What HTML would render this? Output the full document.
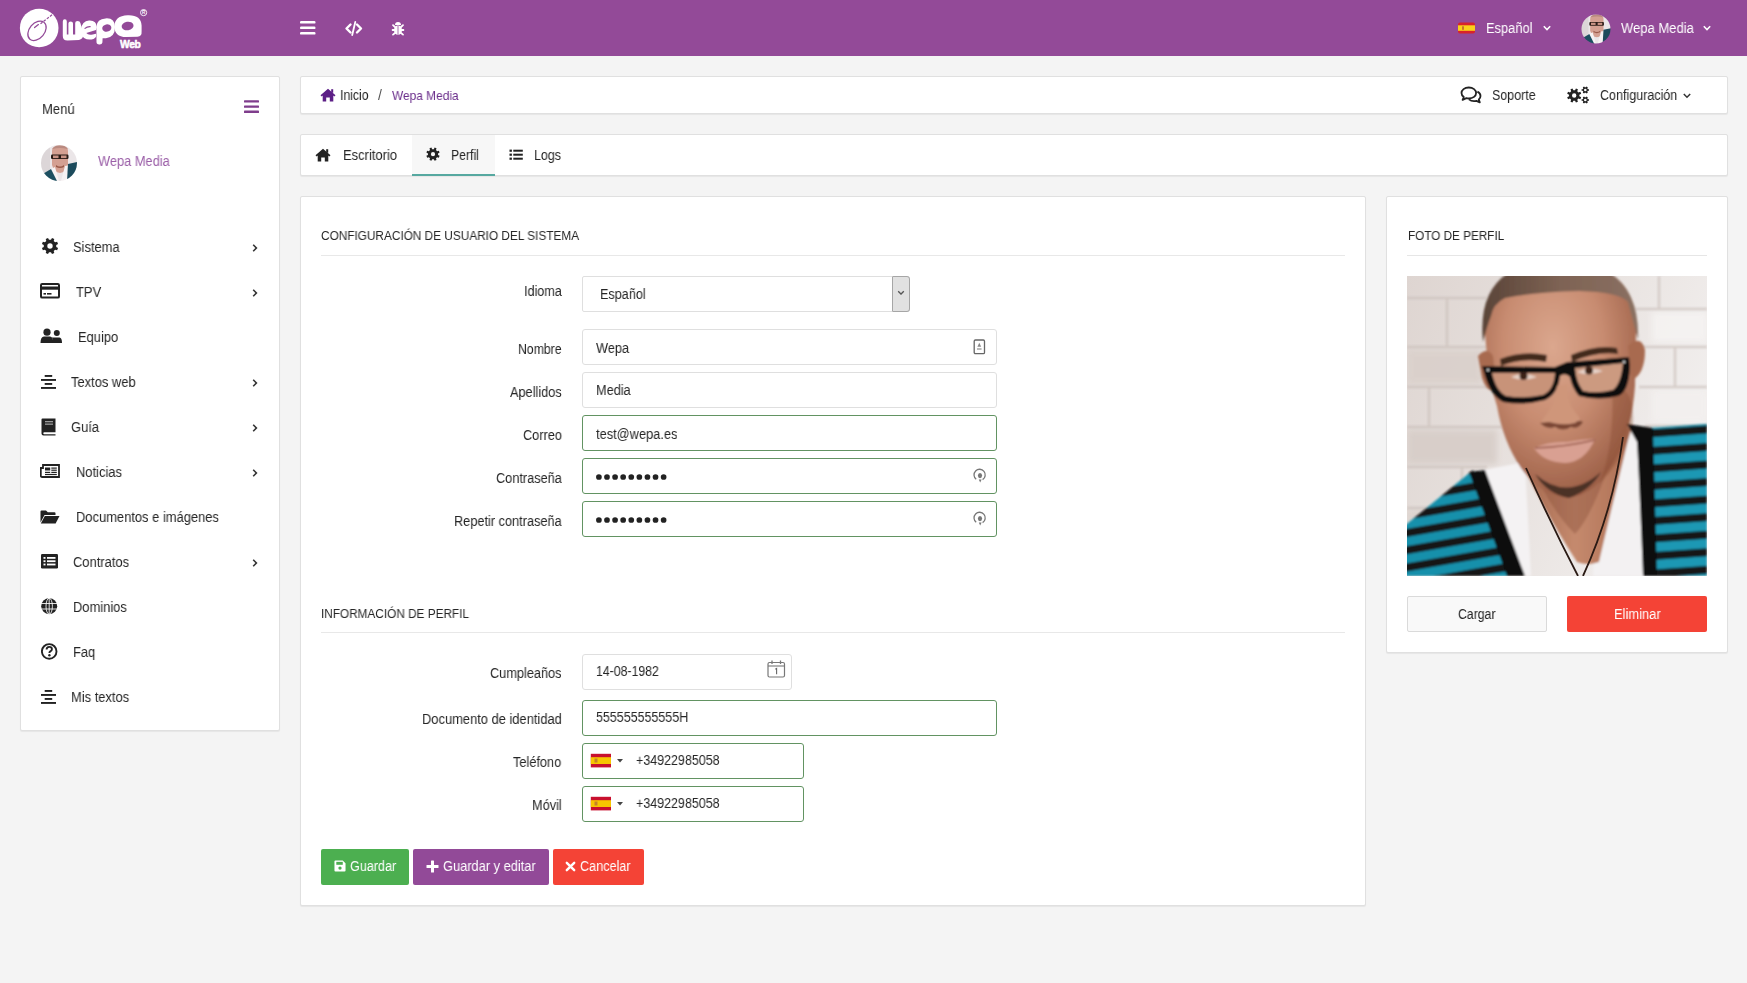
<!DOCTYPE html>
<html lang="es">
<head>
<meta charset="utf-8">
<title>Perfil - Wepa Media</title>
<style>
*{box-sizing:border-box;margin:0;padding:0}
html,body{width:1747px;height:983px;overflow:hidden}
body{background:#f4f4f4;font-family:"Liberation Sans",sans-serif;color:#333;font-size:13px;position:relative}
.a{position:absolute}
.t{position:absolute;white-space:nowrap;line-height:16px;font-size:13px;transform-origin:0 0;will-change:transform}
.card{position:absolute;background:#fff;border:1px solid #e0e0e0;border-radius:2px;box-shadow:0 1px 1px rgba(0,0,0,.06)}
#hdr{position:absolute;left:0;top:0;width:1747px;height:56px;background:#934a98}
svg{display:block}
.inp{position:absolute;left:582px;width:415px;height:36px;border:1px solid #dcdcdc;border-radius:3px;background:#fff}
.inp.ok{border-color:#5d995d}
.lbl{position:absolute;right:1185px;white-space:nowrap;line-height:16px;font-size:13px;color:#333;text-align:right}
.btn{position:absolute;height:36px;border-radius:2px;color:#fff;font-size:13px;line-height:16px}
</style>
</head>
<body>
<svg width="0" height="0" style="position:absolute">
<defs>
<symbol id="photo" viewBox="0 0 300 300">
<defs>
<linearGradient id="wall" x1="0" y1="0" x2="1" y2="0.4"><stop offset="0" stop-color="#ded5d1"/><stop offset="0.55" stop-color="#e8e2df"/><stop offset="1" stop-color="#f1eeed"/></linearGradient>
<radialGradient id="skin" cx="0.45" cy="0.36" r="0.66"><stop offset="0" stop-color="#dba78e"/><stop offset="0.5" stop-color="#c88c71"/><stop offset="1" stop-color="#9a5d45"/></radialGradient>
<linearGradient id="neck" x1="0" y1="0" x2="1" y2="0"><stop offset="0" stop-color="#a0644a"/><stop offset="0.5" stop-color="#c58a6e"/><stop offset="1" stop-color="#ad6f53"/></linearGradient>
<linearGradient id="hair" x1="0" y1="0" x2="1" y2="0"><stop offset="0" stop-color="#5a4438"/><stop offset="0.5" stop-color="#7e6354"/><stop offset="1" stop-color="#8a7062"/></linearGradient>
<pattern id="strL" width="300" height="17" patternUnits="userSpaceOnUse" patternTransform="rotate(-10)"><rect width="300" height="17" fill="#121416"/><rect y="2" width="300" height="9" fill="#1990ab"/></pattern>
<pattern id="strR" width="300" height="17.5" patternUnits="userSpaceOnUse" patternTransform="rotate(-4)"><rect width="300" height="17.5" fill="#121416"/><rect y="3" width="300" height="9.5" fill="#1a98b4"/></pattern>
<filter id="soft" x="-5%" y="-5%" width="110%" height="110%"><feGaussianBlur stdDeviation="1.0"/></filter>
<filter id="soft2"><feGaussianBlur stdDeviation="3"/></filter>
<clipPath id="pclip"><rect width="300" height="300"/></clipPath>
</defs>
<g clip-path="url(#pclip)">
<rect width="300" height="300" fill="url(#wall)"/>
<g filter="url(#soft2)" opacity="0.9">
<rect x="0" y="74" width="75" height="34" fill="#dad0cb"/>
<rect x="0" y="154" width="90" height="34" fill="#d7cdc8"/>
<rect x="0" y="234" width="70" height="20" fill="#dcd3ce"/>
<rect x="245" y="36" width="55" height="30" fill="#f5f3f2"/>
<rect x="245" y="114" width="55" height="32" fill="#f3f0ef"/>
</g>
<g stroke="#cbc0bb" stroke-width="2.4" opacity="0.7" filter="url(#soft)">
<line x1="0" y1="22" x2="80" y2="22"/><line x1="0" y1="71" x2="80" y2="71"/><line x1="0" y1="111" x2="85" y2="111"/>
<line x1="0" y1="151" x2="95" y2="151"/><line x1="0" y1="191" x2="80" y2="191"/><line x1="0" y1="232" x2="60" y2="232"/>
<line x1="228" y1="33" x2="300" y2="33"/><line x1="232" y1="71" x2="300" y2="71"/><line x1="232" y1="111" x2="300" y2="111"/><line x1="238" y1="150" x2="300" y2="150"/>
<line x1="40" y1="22" x2="40" y2="71"/><line x1="252" y1="0" x2="252" y2="33"/><line x1="22" y1="111" x2="22" y2="151"/><line x1="268" y1="71" x2="268" y2="111"/><line x1="55" y1="191" x2="55" y2="232"/>
</g>
<g filter="url(#soft)">
<path d="M66 196 L118 186 L124 300 L100 300 Z" fill="#f4f2f3"/>
<path d="M190 168 L232 150 L242 300 L186 300 Z" fill="#f3f1f2"/>
<path d="M112 182 Q140 240 170 286 Q181 290 192 286 Q205 230 224 152 L200 150 Z" fill="url(#neck)"/>
<path d="M135 212 Q165 236 198 200 Q182 244 168 258 Q150 240 135 212 Z" fill="#8f543d" opacity=".45"/>
<path d="M78 58 Q74 -14 152 -14 Q232 -14 229 56 L228 110 Q225 152 210 180 Q190 220 160 222 Q134 220 114 192 Q96 165 90 130 L82 104 Z" fill="url(#skin)"/>
<path d="M205 110 Q228 110 226 150 Q214 188 192 208 Q208 170 205 110 Z" fill="#84492f" opacity=".35"/>
<path d="M71 80 Q80 70 86 80 L90 114 Q80 118 75 102 Z" fill="#a86a50"/>
<path d="M221 70 Q234 58 238 74 Q238 98 225 104 Z" fill="#a86a50"/>
<path d="M76 66 Q68 -14 152 -16 Q234 -14 231 64 Q226 44 221 26 Q212 16 172 15 Q126 16 98 22 Q86 28 84 40 Q80 50 76 66 Z" fill="url(#hair)"/>
<path d="M93 83 Q116 74 140 79 L139 86 Q116 81 94 90 Z" fill="#432a1e"/>
<path d="M164 79 Q190 68 210 72 L211 78 Q190 75 165 86 Z" fill="#432a1e"/>
<path d="M75 90 L148 91 L160 86 L222 81 L223 90 Q222 116 211 120 Q192 125 172 120 Q165 112 163 101 Q158 96 153 100 Q151 118 138 124 Q116 130 96 126 Q84 120 78 100 Z" fill="#0f0c0b"/>
<path d="M85 97 L148 97 Q147 114 136 119 Q116 123 99 120 Q89 115 85 97 Z" fill="#c89379"/>
<path d="M168 92 L216 87 Q214 108 206 114 Q190 118 176 115 Q169 106 168 92 Z" fill="#cc9a80"/>
<circle cx="81" cy="94" r="1.2" fill="#ddd"/><circle cx="217" cy="86" r="1.2" fill="#ddd"/>
<path d="M104 101 Q116 95 130 101 Q116 106 104 101 Z" fill="#e6d2c8"/>
<path d="M170 96 Q182 90 196 95 Q182 101 170 96 Z" fill="#e6d2c8"/>
<circle cx="116.5" cy="100" r="4" fill="#3a2118"/>
<circle cx="182" cy="94.5" r="4" fill="#3a2118"/>
<path d="M150 110 Q146 132 138 140 Q132 148 136 150 Q154 156 172 149 Q176 144 168 136 Q160 126 160 108 Z" fill="#cf967a"/>
<path d="M133 147 Q140 154 148 151 Q156 156 164 151 Q171 154 176 146 Q172 143 168 147 Q156 150 142 146 Z" fill="#7a4634"/>
<path d="M127 172 Q142 165 160 166 Q176 163 188 163 Q178 186 158 187 Q136 186 127 172 Z" fill="#d9a092"/>
<path d="M128 172 Q158 171 188 164" stroke="#9a5c4c" stroke-width="1.4" fill="none"/>
<path d="M128 198 Q160 226 194 196 Q184 214 162 222 Q140 218 128 198 Z" fill="#4c3026"/>
<path d="M-5 252 L66 194 L104 300 L-5 300 Z" fill="url(#strL)"/>
<path d="M62 196 L78 194 L118 300 L100 300 Z" fill="#0f1011"/>
<path d="M242 152 L300 148 L300 300 L248 300 Z" fill="url(#strR)"/>
<path d="M220 148 L246 152 L250 300 L236 300 Q232 200 230 166 Z" fill="#0f1011"/>
</g>
<path d="M119 192 Q145 250 171 300 M216 161 Q206 235 176 300" stroke="#2a1a14" stroke-width="1.8" fill="none"/>
</g>
</symbol>
<symbol id="avatar" viewBox="0 0 36 36">
<defs><filter id="asoft"><feGaussianBlur stdDeviation="0.5"/></filter></defs>
<g filter="url(#asoft)">
<rect width="36" height="36" fill="#ebe6e8"/>
<rect x="0" y="0" width="9" height="36" fill="#dcd6d8"/>
<path d="M11 6 Q11 0.5 19 0.5 Q27 0.5 27 6 L27 20 Q25 27 19 28 Q13 27 11 20 Z" fill="#d4a092"/>
<path d="M11 6 Q11 0.5 19 0.5 Q27 0.5 27 6 L26.5 4 Q19 2 11.5 4 Z" fill="#b98a80"/>
<rect x="10" y="9.5" width="17.5" height="4.5" rx="1.2" fill="#2a1c18"/>
<rect x="12" y="10.5" width="5.5" height="2.6" fill="#c99385"/>
<rect x="20" y="10.5" width="5.5" height="2.6" fill="#c99385"/>
<path d="M15 20 Q19 23 23 20 L23 22 Q19 24 15 22 Z" fill="#9a5a4a"/>
<path d="M8 25 L14 22 L18 36 L8 36 Z" fill="#f6f2f3"/>
<path d="M24 21 L30 20 L28 36 L20 36 Z" fill="#f6f2f3"/>
<path d="M0 30 L10 24 L16 36 L0 36 Z" fill="#1d4f60"/>
<path d="M27 19 L36 17 L36 36 L26 36 Z" fill="#1b4b5c"/>
</g>
</symbol>
</defs>
</svg>

<!-- HEADER -->
<div id="hdr">
<svg class="a" style="left:0;top:0" width="160" height="56" viewBox="0 0 160 56">
<circle cx="39.2" cy="28" r="19.3" fill="#fff"/>
<ellipse cx="37" cy="30.8" rx="7.6" ry="11" transform="rotate(40 37 30.8)" fill="none" stroke="#934a98" stroke-width="1.3"/>
<line x1="40.5" y1="23.8" x2="52" y2="14.8" stroke="#934a98" stroke-width="1.2" stroke-dasharray="2.6 1.4"/>
<line x1="34.6" y1="27.6" x2="38.4" y2="24.6" stroke="#934a98" stroke-width="1.3" stroke-linecap="round"/>
<g fill="#fff">
<path d="M62.8 21.5 Q62.8 19.2 64.8 19.2 Q66.8 19.2 66.8 21.5 L66.8 34.5 L68.4 34.5 L68.4 23.5 Q68.4 21.5 70.7 21.5 Q73 21.5 73 23.5 L73 34.5 L75.2 34.5 L75.2 23 Q75.2 21 77.6 21 Q80 21 80.4 23 L83.2 33 Q84 38.5 79 40 L67.5 40.6 Q62.8 40.6 62.8 36 Z"/>
<path d="M89 20.6 Q96.6 20.2 96.8 27.4 L96 30 L86.3 33 Q88.2 35.6 92.8 34.4 L96 33.8 Q97 37.5 93.5 39 Q88 40.5 84 38 Q80.6 34.8 81 29.5 Q82 21 89 20.6 Z"/>
<path d="M105.5 18.4 Q114.8 17.6 115 27 Q115 37.2 106 38.2 L102.6 38.2 L102.4 42.5 Q102 44.8 99.3 44.6 Q96.4 44.4 96.5 41.8 L96.4 26.5 Q97 18.8 105.5 18.4 Z"/>
<path d="M127.6 15.2 Q141 14.6 141.6 25.5 L141.6 31.6 Q142 36.4 137.5 36.8 L126 37 Q114.4 36.8 114.4 26.4 Q114.6 15.8 127.6 15.2 Z"/>
</g>
<path d="M84.6 28.6 Q87.5 26.2 90.6 26.6" stroke="#934a98" stroke-width="1.2" fill="none"/>
<ellipse cx="106.8" cy="28" rx="4.6" ry="3.7" transform="rotate(-12 106.8 28)" fill="#934a98"/>
<ellipse cx="127.6" cy="26" rx="6" ry="4.3" transform="rotate(-10 127.6 26)" fill="#934a98"/>
<text x="120" y="47.6" font-family="Liberation Sans" font-weight="bold" font-size="10.3" fill="#fff" stroke="#fff" stroke-width="0.5" letter-spacing="-0.4">Web</text>
<circle cx="143.6" cy="12.6" r="3.1" fill="none" stroke="#fff" stroke-width="0.9"/>
<text x="142" y="14.3" font-family="Liberation Sans" font-weight="bold" font-size="4.6" fill="#fff">R</text>
</svg>
<svg class="a" style="left:299px;top:20px" width="18" height="16" viewBox="0 0 18 16">
<rect x="1" y="1" width="15.5" height="2.6" rx="1.2" fill="#fff"/>
<rect x="1" y="6.5" width="15.5" height="2.6" rx="1.2" fill="#fff"/>
<rect x="1" y="12" width="15.5" height="2.6" rx="1.2" fill="#fff"/>
</svg>
<svg class="a" style="left:344px;top:20px" width="20" height="17" viewBox="0 0 20 17">
<polyline points="6.5,4.5 2.5,8.5 6.5,12.5" fill="none" stroke="#fff" stroke-width="2.4" stroke-linecap="round" stroke-linejoin="round"/>
<polyline points="13,4.5 17,8.5 13,12.5" fill="none" stroke="#fff" stroke-width="2.4" stroke-linecap="round" stroke-linejoin="round"/>
<line x1="11.3" y1="2" x2="8.2" y2="15" stroke="#fff" stroke-width="1.8" stroke-linecap="round"/>
</svg>
<svg class="a" style="left:390px;top:20px" width="16" height="16" viewBox="0 0 16 16">
<path d="M5 5 A3 3 0 0 1 11 5 Z" fill="#fff"/>
<ellipse cx="8" cy="10.2" rx="4" ry="4.8" fill="#fff"/>
<line x1="8" y1="6" x2="8" y2="15" stroke="#934a98" stroke-width="0.8"/>
<path d="M3 5.2 L5 7 M13 5.2 L11 7 M2.6 10 H4.5 M13.4 10 H11.5 M3 14.6 L5 13 M13 14.6 L11 13" stroke="#fff" stroke-width="1.8" stroke-linecap="round"/>
</svg>
<svg class="a" style="left:1457px;top:21px" width="20" height="14" viewBox="0 0 20 14">
<rect x="1" y="1.5" width="17" height="11" rx="2" fill="#d8232a"/>
<rect x="1" y="4.3" width="17" height="5.5" fill="#f9d21b"/>
<rect x="5" y="5.3" width="2" height="3.5" fill="#c8742a"/>
</svg>
<div class="t" style="left:1486.00px;top:20px;font-size:14px;color:#fff;transform:scaleX(0.919)">Español</div>
<svg class="a" style="left:1542px;top:24px" width="10" height="8" viewBox="0 0 10 8"><polyline points="1.8,2.3 5,5.5 8.2,2.3" fill="none" stroke="#fff" stroke-width="1.6"/></svg>
<svg class="a" style="left:1581px;top:14px" width="30" height="30" viewBox="0 0 30 30"><defs><clipPath id="cp1"><circle cx="15" cy="15" r="14.5"/></clipPath></defs><g clip-path="url(#cp1)"><use href="#avatar" x="0" y="0" width="30" height="30"/></g></svg>
<div class="t" style="left:1620.70px;top:20px;font-size:14px;color:#fff;transform:scaleX(0.930)">Wepa Media</div>
<svg class="a" style="left:1702px;top:24px" width="10" height="8" viewBox="0 0 10 8"><polyline points="1.8,2.3 5,5.5 8.2,2.3" fill="none" stroke="#fff" stroke-width="1.6"/></svg>
</div>

<!-- SIDEBAR -->
<div class="card" style="left:20px;top:76px;width:260px;height:655px"></div>
<div class="t" style="left:41.70px;top:101px;font-size:14.5px;color:#262626;transform:scaleX(0.899)">Menú</div>
<svg class="a" style="left:243px;top:99px" width="17" height="15" viewBox="0 0 17 15"><rect x="1" y="1.2" width="15" height="2.4" rx=".6" fill="#7f3d8c"/><rect x="1" y="6.4" width="15" height="2.4" rx=".6" fill="#7f3d8c"/><rect x="1" y="11.6" width="15" height="2.4" rx=".6" fill="#7f3d8c"/></svg>
<svg class="a" style="left:41px;top:145px" width="36" height="36" viewBox="0 0 36 36"><defs><clipPath id="cp2"><circle cx="18" cy="18" r="18"/></clipPath></defs><g clip-path="url(#cp2)"><use href="#avatar" width="36" height="36"/></g></svg>
<div class="t" style="left:97.50px;top:153px;font-size:14px;color:#9b5fa8;transform:scaleX(0.916)">Wepa Media</div>
<div class="a" style="left:41px;top:237px"><svg width="18" height="18" viewBox="0 0 18 18"><path fill-rule="evenodd" fill="#222" d="M15.22 9.99 L17.06 11.00 L16.11 13.28 L14.10 12.70 L12.70 14.10 L13.28 16.11 L11.00 17.06 L9.99 15.22 L8.01 15.22 L7.00 17.06 L4.72 16.11 L5.30 14.10 L3.90 12.70 L1.89 13.28 L0.94 11.00 L2.78 9.99 L2.78 8.01 L0.94 7.00 L1.89 4.72 L3.90 5.30 L5.30 3.90 L4.72 1.89 L7.00 0.94 L8.01 2.78 L9.99 2.78 L11.00 0.94 L13.28 1.89 L12.70 3.90 L14.10 5.30 L16.11 4.72 L17.06 7.00 L15.22 8.01 Z M11.70 9.00 A2.7 2.7 0 1 0 6.30 9.00 A2.7 2.7 0 1 0 11.70 9.00 Z"/></svg></div>
<div class="t" style="left:72.70px;top:239px;font-size:14px;color:#262626;transform:scaleX(0.923)">Sistema</div>
<div class="a" style="left:251px;top:243px"><svg width="8" height="10" viewBox="0 0 8 10"><polyline points="2.2,1.8 5.4,5 2.2,8.2" fill="none" stroke="#333" stroke-width="1.6"/></svg></div>
<div class="a" style="left:40px;top:283px"><svg width="20" height="16" viewBox="0 0 20 16"><rect x="1" y="1" width="18" height="13.6" rx="1.2" fill="none" stroke="#222" stroke-width="2"/><rect x="1" y="3.5" width="18" height="3.2" fill="#222"/><rect x="3.5" y="10" width="2.5" height="1.6" fill="#222"/><rect x="7" y="10" width="4.5" height="1.6" fill="#222"/></svg></div>
<div class="t" style="left:75.70px;top:284px;font-size:14px;color:#262626;transform:scaleX(0.923)">TPV</div>
<div class="a" style="left:251px;top:288px"><svg width="8" height="10" viewBox="0 0 8 10"><polyline points="2.2,1.8 5.4,5 2.2,8.2" fill="none" stroke="#333" stroke-width="1.6"/></svg></div>
<div class="a" style="left:40px;top:328px"><svg width="23" height="16" viewBox="0 0 23 16"><circle cx="7" cy="4.2" r="3.6" fill="#222"/><path d="M0.5 15 Q0.5 9 4 8.6 L10 8.6 Q13.2 9 13.2 15 Z" fill="#222"/><circle cx="16.8" cy="5" r="3" fill="#222"/><path d="M12.5 15 Q13 10 11.6 9.5 L19.5 9.5 Q22 9.8 22 15 Z" fill="#222"/></svg></div>
<div class="t" style="left:77.90px;top:329px;font-size:14px;color:#262626;transform:scaleX(0.923)">Equipo</div>
<div class="a" style="left:41px;top:373.5px"><svg width="16" height="16" viewBox="0 0 16 16"><rect x="3.7" y="1" width="7.5" height="1.9" fill="#222"/><rect x="0" y="5" width="15" height="1.9" fill="#222"/><rect x="3.7" y="9" width="7.5" height="1.9" fill="#222"/><rect x="0" y="13" width="15" height="1.9" fill="#222"/></svg></div>
<div class="t" style="left:70.80px;top:374px;font-size:14px;color:#262626;transform:scaleX(0.923)">Textos web</div>
<div class="a" style="left:251px;top:378px"><svg width="8" height="10" viewBox="0 0 8 10"><polyline points="2.2,1.8 5.4,5 2.2,8.2" fill="none" stroke="#333" stroke-width="1.6"/></svg></div>
<div class="a" style="left:40.5px;top:417.5px"><svg width="16" height="18" viewBox="0 0 16 18"><path d="M1.5 0.5 H14.5 V14.2 H3.2 Q2.3 14.2 2.3 15.2 Q2.3 16.2 3.2 16.2 H14.5 V17.5 H2.5 Q0.5 17.5 0.5 15.5 V1.5 Q0.5 0.5 1.5 0.5 Z" fill="#222"/><rect x="4" y="3" width="8" height="1.3" fill="#fff" opacity=".55"/><rect x="4" y="5.5" width="8" height="1.3" fill="#fff" opacity=".55"/></svg></div>
<div class="t" style="left:70.80px;top:419px;font-size:14px;color:#262626;transform:scaleX(0.923)">Guía</div>
<div class="a" style="left:251px;top:423px"><svg width="8" height="10" viewBox="0 0 8 10"><polyline points="2.2,1.8 5.4,5 2.2,8.2" fill="none" stroke="#333" stroke-width="1.6"/></svg></div>
<div class="a" style="left:40px;top:464px"><svg width="20" height="14" viewBox="0 0 20 14"><path d="M3 1 H19 V13 H2 Q0.8 13 0.8 11.8 V4 H3 Z" fill="none" stroke="#222" stroke-width="1.8"/><rect x="5" y="3.5" width="5.2" height="3" fill="#222"/><rect x="11.3" y="3.5" width="5.5" height="1.2" fill="#222"/><rect x="11.3" y="5.6" width="5.5" height="1.2" fill="#222"/><rect x="5" y="7.8" width="5.2" height="1.2" fill="#222"/><rect x="11.3" y="7.8" width="5.5" height="1.2" fill="#222"/><rect x="5" y="9.9" width="11.8" height="1.2" fill="#222"/></svg></div>
<div class="t" style="left:75.70px;top:464px;font-size:14px;color:#262626;transform:scaleX(0.923)">Noticias</div>
<div class="a" style="left:251px;top:468px"><svg width="8" height="10" viewBox="0 0 8 10"><polyline points="2.2,1.8 5.4,5 2.2,8.2" fill="none" stroke="#333" stroke-width="1.6"/></svg></div>
<div class="a" style="left:40px;top:509.5px"><svg width="20" height="14" viewBox="0 0 20 14"><path d="M0.5 12.5 V1.5 Q0.5 0.5 1.5 0.5 H6 L7.8 2.3 H14.5 Q15.5 2.3 15.5 3.3 V5 H4.5 Z" fill="#222"/><path d="M0.8 13.5 L4.8 6 H19.5 L15.6 13.5 Z" fill="#222"/></svg></div>
<div class="t" style="left:75.70px;top:509px;font-size:14px;color:#262626;transform:scaleX(0.923)">Documentos e imágenes</div>
<div class="a" style="left:41px;top:554px"><svg width="17" height="15" viewBox="0 0 17 15"><rect x="0" y="0" width="17" height="14.5" rx="1.2" fill="#222"/><rect x="2.5" y="3" width="2" height="1.8" fill="#fff"/><rect x="6" y="3" width="8.5" height="1.8" fill="#fff"/><rect x="2.5" y="6.3" width="2" height="1.8" fill="#fff"/><rect x="6" y="6.3" width="8.5" height="1.8" fill="#fff"/><rect x="2.5" y="9.6" width="2" height="1.8" fill="#fff"/><rect x="6" y="9.6" width="8.5" height="1.8" fill="#fff"/></svg></div>
<div class="t" style="left:72.60px;top:554px;font-size:14px;color:#262626;transform:scaleX(0.923)">Contratos</div>
<div class="a" style="left:251px;top:558px"><svg width="8" height="10" viewBox="0 0 8 10"><polyline points="2.2,1.8 5.4,5 2.2,8.2" fill="none" stroke="#333" stroke-width="1.6"/></svg></div>
<div class="a" style="left:40.8px;top:598.2px"><svg width="17" height="17" viewBox="0 0 17 17"><circle cx="8.2" cy="8.2" r="8" fill="#222"/><g stroke="#fff" stroke-width="0.85" fill="none"><ellipse cx="8.2" cy="8.2" rx="3.2" ry="8"/><line x1="0" y1="5.5" x2="16.4" y2="5.5"/><line x1="0" y1="11" x2="16.4" y2="11"/><line x1="8.2" y1="0" x2="8.2" y2="16.4"/></g></svg></div>
<div class="t" style="left:72.60px;top:599px;font-size:14px;color:#262626;transform:scaleX(0.923)">Dominios</div>
<div class="a" style="left:40.8px;top:643px"><svg width="17" height="17" viewBox="0 0 17 17"><circle cx="8.2" cy="8.4" r="7.3" fill="none" stroke="#222" stroke-width="1.9"/><path d="M5.6 6.5 Q5.6 3.9 8.3 3.9 Q10.9 3.9 10.9 6.2 Q10.9 7.6 9.3 8.3 Q8.4 8.8 8.4 10" fill="none" stroke="#222" stroke-width="1.9"/><circle cx="8.4" cy="12.3" r="1.2" fill="#222"/></svg></div>
<div class="t" style="left:72.60px;top:644px;font-size:14px;color:#262626;transform:scaleX(0.923)">Faq</div>
<div class="a" style="left:41px;top:689px"><svg width="16" height="16" viewBox="0 0 16 16"><rect x="3.7" y="1" width="7.5" height="1.9" fill="#222"/><rect x="0" y="5" width="15" height="1.9" fill="#222"/><rect x="3.7" y="9" width="7.5" height="1.9" fill="#222"/><rect x="0" y="13" width="15" height="1.9" fill="#222"/></svg></div>
<div class="t" style="left:70.90px;top:689px;font-size:14px;color:#262626;transform:scaleX(0.923)">Mis textos</div>

<!-- BREADCRUMB -->
<div class="card" style="left:300px;top:76px;width:1428px;height:38px"></div>
<div class="a" style="left:320px;top:88px"><svg width="16" height="14" viewBox="0 0 16 14"><path d="M8 0.8 L15.5 7.3 L14.3 8.5 L13.3 7.6 V13.5 H9.8 V9.6 H6.2 V13.5 H2.7 V7.6 L1.7 8.5 L0.5 7.3 Z" fill="#5c1f86"/><rect x="11.2" y="1.2" width="2" height="3.6" fill="#5c1f86"/></svg></div>
<div class="t" style="left:339.60px;top:87px;font-size:14px;color:#262626;transform:scaleX(0.872)">Inicio</div>
<div class="t" style="left:378.20px;top:87px;font-size:14px;color:#555;transform:scaleX(0.920)">/</div>
<div class="t" style="left:391.50px;top:88px;font-size:13px;color:#6a2d8b;transform:scaleX(0.915)">Wepa Media</div>
<svg class="a" style="left:1460px;top:86px" width="22" height="18" viewBox="0 0 22 18"><path d="M8.8 1.5 C4.5 1.5 1.5 4 1.5 7 C1.5 8.6 2.4 10 3.8 11 L2.6 13.8 L6.4 12.2 C7.2 12.4 8 12.5 8.8 12.5 C13.1 12.5 16.1 10 16.1 7 C16.1 4 13.1 1.5 8.8 1.5 Z" fill="none" stroke="#222" stroke-width="1.8" stroke-linejoin="round"/><path d="M17.4 5.6 C19.4 6.6 20.5 8.2 20.5 10 C20.5 11.4 19.9 12.6 18.8 13.5 L19.8 16.4 L16.4 14.9 C15.6 15.1 14.8 15.2 14 15.2 C12 15.2 10.2 14.5 9 13.4" fill="none" stroke="#222" stroke-width="1.8" stroke-linejoin="round"/></svg>
<div class="t" style="left:1492.40px;top:87px;font-size:14px;color:#262626;transform:scaleX(0.891)">Soporte</div>
<div class="a" style="left:1567px;top:86px"><svg width="23" height="18" viewBox="0 0 23 18"><path fill-rule="evenodd" fill="#222" d="M12.34 10.31 L14.19 11.24 L13.37 13.21 L11.41 12.56 L10.26 13.71 L10.91 15.67 L8.94 16.49 L8.01 14.64 L6.39 14.64 L5.46 16.49 L3.49 15.67 L4.14 13.71 L2.99 12.56 L1.03 13.21 L0.21 11.24 L2.06 10.31 L2.06 8.69 L0.21 7.76 L1.03 5.79 L2.99 6.44 L4.14 5.29 L3.49 3.33 L5.46 2.51 L6.39 4.36 L8.01 4.36 L8.94 2.51 L10.91 3.33 L10.26 5.29 L11.41 6.44 L13.37 5.79 L14.19 7.76 L12.34 8.69 Z M9.40 9.50 A2.2 2.2 0 1 0 5.00 9.50 A2.2 2.2 0 1 0 9.40 9.50 Z"/><path fill-rule="evenodd" fill="#222" d="M20.87 3.17 L22.03 3.25 L22.03 4.75 L20.87 4.83 L20.31 5.81 L20.81 6.85 L19.51 7.60 L18.86 6.64 L17.74 6.64 L17.09 7.60 L15.79 6.85 L16.29 5.81 L15.73 4.83 L14.57 4.75 L14.57 3.25 L15.73 3.17 L16.29 2.19 L15.79 1.15 L17.09 0.40 L17.74 1.36 L18.86 1.36 L19.51 0.40 L20.81 1.15 L20.31 2.19 Z M19.60 4.00 A1.3 1.3 0 1 0 17.00 4.00 A1.3 1.3 0 1 0 19.60 4.00 Z"/><path fill-rule="evenodd" fill="#222" d="M20.87 13.17 L22.03 13.25 L22.03 14.75 L20.87 14.83 L20.31 15.81 L20.81 16.85 L19.51 17.60 L18.86 16.64 L17.74 16.64 L17.09 17.60 L15.79 16.85 L16.29 15.81 L15.73 14.83 L14.57 14.75 L14.57 13.25 L15.73 13.17 L16.29 12.19 L15.79 11.15 L17.09 10.40 L17.74 11.36 L18.86 11.36 L19.51 10.40 L20.81 11.15 L20.31 12.19 Z M19.60 14.00 A1.3 1.3 0 1 0 17.00 14.00 A1.3 1.3 0 1 0 19.60 14.00 Z"/></svg></div>
<div class="t" style="left:1600.40px;top:87px;font-size:14px;color:#262626;transform:scaleX(0.894)">Configuración</div>
<svg class="a" style="left:1682px;top:92px" width="10" height="8" viewBox="0 0 10 8"><polyline points="1.8,2 5,5.2 8.2,2" fill="none" stroke="#333" stroke-width="1.5"/></svg>

<!-- TABS -->
<div class="card" style="left:300px;top:134px;width:1428px;height:42px"></div>
<div class="a" style="left:412px;top:135px;width:83px;height:40px;background:#f7f7f7"></div>
<div class="a" style="left:412px;top:174px;width:83px;height:2px;background:#56a8a0"></div>
<div class="a" style="left:315px;top:148px"><svg width="16" height="14" viewBox="0 0 16 14"><path d="M8 0.8 L15.5 7.3 L14.3 8.5 L13.3 7.6 V13.5 H9.8 V9.6 H6.2 V13.5 H2.7 V7.6 L1.7 8.5 L0.5 7.3 Z" fill="#222"/><rect x="11.2" y="1.2" width="2" height="3.6" fill="#222"/></svg></div>
<div class="t" style="left:342.50px;top:147px;font-size:14px;color:#262626;transform:scaleX(0.927)">Escritorio</div>
<div class="a" style="left:426px;top:147px"><svg width="15" height="15" viewBox="0 0 15 15"><path fill-rule="evenodd" fill="#222" d="M12.04 8.00 L13.60 8.84 L12.83 10.71 L11.13 10.20 L10.00 11.33 L10.51 13.03 L8.64 13.80 L7.80 12.24 L6.20 12.24 L5.36 13.80 L3.49 13.03 L4.00 11.33 L2.87 10.20 L1.17 10.71 L0.40 8.84 L1.96 8.00 L1.96 6.40 L0.40 5.56 L1.17 3.69 L2.87 4.20 L4.00 3.07 L3.49 1.37 L5.36 0.60 L6.20 2.16 L7.80 2.16 L8.64 0.60 L10.51 1.37 L10.00 3.07 L11.13 4.20 L12.83 3.69 L13.60 5.56 L12.04 6.40 Z M9.10 7.20 A2.1 2.1 0 1 0 4.90 7.20 A2.1 2.1 0 1 0 9.10 7.20 Z"/></svg></div>
<div class="t" style="left:451.20px;top:147px;font-size:14px;color:#262626;transform:scaleX(0.875)">Perfil</div>
<div class="a" style="left:509px;top:149px"><svg width="15" height="12" viewBox="0 0 15 12"><rect x="0.5" y="0.6" width="2.4" height="2.2" fill="#222"/><rect x="4.3" y="0.7" width="9.5" height="2" fill="#222"/><rect x="0.5" y="4.6" width="2.4" height="2.2" fill="#222"/><rect x="4.3" y="4.7" width="9.5" height="2" fill="#222"/><rect x="0.5" y="8.6" width="2.4" height="2.2" fill="#222"/><rect x="4.3" y="8.7" width="9.5" height="2" fill="#222"/></svg></div>
<div class="t" style="left:534.00px;top:147px;font-size:14px;color:#262626;transform:scaleX(0.890)">Logs</div>

<!-- FORM -->
<div class="card" style="left:300px;top:196px;width:1066px;height:710px"></div>
<div class="t" style="left:321.40px;top:228px;font-size:12px;color:#262626;transform:scaleX(0.984)">CONFIGURACIÓN DE USUARIO DEL SISTEMA</div>
<div class="a" style="left:321px;top:255px;width:1024px;height:1px;background:#e8e8e8"></div>
<div class="t" style="left:524.00px;top:283px;font-size:14px;color:#262626;transform:scaleX(0.899)">Idioma</div>
<div class="a" style="left:582px;top:276px;width:328px;height:36px;border:1px solid #dfdfdf;border-radius:2px;background:#fff"></div>
<div class="a" style="left:892px;top:276px;width:18px;height:36px;border:1px solid #a6a6a6;border-radius:1px 3px 3px 1px;background:#e1e1e1"></div>
<svg class="a" style="left:896px;top:289px" width="10" height="8" viewBox="0 0 10 8"><polyline points="2.2,2.3 5,5 7.8,2.3" fill="none" stroke="#555" stroke-width="1.3"/></svg>
<div class="t" style="left:599.60px;top:286px;font-size:14px;color:#262626;transform:scaleX(0.903)">Español</div>
<div class="t" style="left:517.90px;top:341px;font-size:14px;color:#262626;transform:scaleX(0.876)">Nombre</div>
<div class="a" style="left:582px;top:329px;width:415px;height:36px;border:1px solid #dfdfdf;border-radius:3px;background:#fff"></div>
<div class="t" style="left:595.60px;top:340px;font-size:14px;color:#262626;transform:scaleX(0.910)">Wepa</div>
<div class="a" style="left:973px;top:339px"><svg width="13" height="16" viewBox="0 0 13 16"><rect x="1.2" y="1" width="10.3" height="13.6" rx="1.2" fill="none" stroke="#666" stroke-width="1.3"/><path d="M6.3 3.8 L8.2 7.8 H4.4 Z" fill="#888"/><rect x="4" y="9.2" width="4.6" height="1.6" fill="#aaa"/></svg></div>
<div class="t" style="left:509.81px;top:384px;font-size:14px;color:#262626;transform:scaleX(0.910)">Apellidos</div>
<div class="a" style="left:582px;top:372px;width:415px;height:36px;border:1px solid #dfdfdf;border-radius:3px;background:#fff"></div>
<div class="t" style="left:595.60px;top:382px;font-size:14px;color:#262626;transform:scaleX(0.910)">Media</div>
<div class="t" style="left:522.55px;top:427px;font-size:14px;color:#262626;transform:scaleX(0.910)">Correo</div>
<div class="a" style="left:582px;top:415px;width:415px;height:36px;border:1px solid #629362;border-radius:3px;background:#fff"></div>
<div class="t" style="left:595.60px;top:426px;font-size:14px;color:#262626;transform:scaleX(0.915)">test@wepa.es</div>
<div class="t" style="left:495.62px;top:470px;font-size:14px;color:#262626;transform:scaleX(0.910)">Contraseña</div>
<div class="a" style="left:582px;top:458px;width:415px;height:36px;border:1px solid #629362;border-radius:3px;background:#fff"></div>
<svg class="a" style="left:594px;top:472px" width="80" height="10" viewBox="0 0 80 10"><circle cx="4.90" cy="5" r="2.85" fill="#222"/><circle cx="12.99" cy="5" r="2.85" fill="#222"/><circle cx="21.08" cy="5" r="2.85" fill="#222"/><circle cx="29.17" cy="5" r="2.85" fill="#222"/><circle cx="37.26" cy="5" r="2.85" fill="#222"/><circle cx="45.35" cy="5" r="2.85" fill="#222"/><circle cx="53.44" cy="5" r="2.85" fill="#222"/><circle cx="61.53" cy="5" r="2.85" fill="#222"/><circle cx="69.62" cy="5" r="2.85" fill="#222"/></svg>
<div class="a" style="left:972px;top:467px"><svg width="16" height="18" viewBox="0 0 16 18"><path d="M4.2 12.3 A5.6 5.6 0 1 1 10.6 12.6" fill="none" stroke="#777" stroke-width="1.3"/><ellipse cx="8" cy="8.6" rx="2.1" ry="2.6" fill="#777"/><path d="M6.8 12.5 H9.6 L8.2 15.5 Z" fill="#777"/></svg></div>
<div class="t" style="left:453.90px;top:513px;font-size:14px;color:#262626;transform:scaleX(0.910)">Repetir contraseña</div>
<div class="a" style="left:582px;top:501px;width:415px;height:36px;border:1px solid #629362;border-radius:3px;background:#fff"></div>
<svg class="a" style="left:594px;top:515px" width="80" height="10" viewBox="0 0 80 10"><circle cx="4.90" cy="5" r="2.85" fill="#222"/><circle cx="12.99" cy="5" r="2.85" fill="#222"/><circle cx="21.08" cy="5" r="2.85" fill="#222"/><circle cx="29.17" cy="5" r="2.85" fill="#222"/><circle cx="37.26" cy="5" r="2.85" fill="#222"/><circle cx="45.35" cy="5" r="2.85" fill="#222"/><circle cx="53.44" cy="5" r="2.85" fill="#222"/><circle cx="61.53" cy="5" r="2.85" fill="#222"/><circle cx="69.62" cy="5" r="2.85" fill="#222"/></svg>
<div class="a" style="left:972px;top:510px"><svg width="16" height="18" viewBox="0 0 16 18"><path d="M4.2 12.3 A5.6 5.6 0 1 1 10.6 12.6" fill="none" stroke="#777" stroke-width="1.3"/><ellipse cx="8" cy="8.6" rx="2.1" ry="2.6" fill="#777"/><path d="M6.8 12.5 H9.6 L8.2 15.5 Z" fill="#777"/></svg></div>
<div class="t" style="left:321.00px;top:606px;font-size:12px;color:#262626;transform:scaleX(0.982)">INFORMACIÓN DE PERFIL</div>
<div class="a" style="left:321px;top:632px;width:1024px;height:1px;background:#e8e8e8"></div>
<div class="t" style="left:489.97px;top:665px;font-size:14px;color:#262626;transform:scaleX(0.910)">Cumpleaños</div>
<div class="a" style="left:582px;top:654px;width:210px;height:36px;border:1px solid #dfdfdf;border-radius:3px;background:#fff"></div>
<div class="t" style="left:595.50px;top:663px;font-size:14px;color:#262626;transform:scaleX(0.878)">14-08-1982</div>
<div class="a" style="left:767px;top:660px"><svg width="19" height="18" viewBox="0 0 19 18"><rect x="1" y="2.5" width="16.5" height="14.5" rx="1.5" fill="none" stroke="#777" stroke-width="1.2"/><line x1="1" y1="6" x2="17.5" y2="6" stroke="#777" stroke-width="1.1"/><line x1="5" y1="0.5" x2="5" y2="4" stroke="#777" stroke-width="1.3"/><line x1="13.5" y1="0.5" x2="13.5" y2="4" stroke="#777" stroke-width="1.3"/><path d="M8.3 9.2 L9.6 8.4 V14.2" fill="none" stroke="#666" stroke-width="1.1"/></svg></div>
<div class="t" style="left:421.90px;top:711px;font-size:14px;color:#262626;transform:scaleX(0.921)">Documento de identidad</div>
<div class="a" style="left:582px;top:700px;width:415px;height:36px;border:1px solid #629362;border-radius:3px;background:#fff"></div>
<div class="t" style="left:595.50px;top:709px;font-size:14px;color:#262626;transform:scaleX(0.890)">555555555555H</div>
<div class="t" style="left:513.32px;top:754px;font-size:14px;color:#262626;transform:scaleX(0.910)">Teléfono</div>
<div class="a" style="left:582px;top:743px;width:222px;height:36px;border:1px solid #629362;border-radius:3px;background:#fff"></div>
<div class="a" style="left:590px;top:753px"><svg width="22" height="15" viewBox="0 0 22 15"><rect x="0.8" y="0.8" width="20.2" height="13.6" fill="#c8102e"/><rect x="0.8" y="4.2" width="20.2" height="6.8" fill="#f7c600"/><rect x="4.5" y="5.5" width="3" height="4" fill="#c07a2a" opacity=".9"/></svg></div>
<div class="a" style="left:616px;top:758px"><svg width="8" height="6" viewBox="0 0 8 6"><path d="M1 1 H7 L4 4.6 Z" fill="#444"/></svg></div>
<div class="t" style="left:635.50px;top:752px;font-size:14px;color:#262626;transform:scaleX(0.891)">+34922985058</div>
<div class="t" style="left:531.79px;top:797px;font-size:14px;color:#262626;transform:scaleX(0.910)">Móvil</div>
<div class="a" style="left:582px;top:786px;width:222px;height:36px;border:1px solid #629362;border-radius:3px;background:#fff"></div>
<div class="a" style="left:590px;top:796px"><svg width="22" height="15" viewBox="0 0 22 15"><rect x="0.8" y="0.8" width="20.2" height="13.6" fill="#c8102e"/><rect x="0.8" y="4.2" width="20.2" height="6.8" fill="#f7c600"/><rect x="4.5" y="5.5" width="3" height="4" fill="#c07a2a" opacity=".9"/></svg></div>
<div class="a" style="left:616px;top:801px"><svg width="8" height="6" viewBox="0 0 8 6"><path d="M1 1 H7 L4 4.6 Z" fill="#444"/></svg></div>
<div class="t" style="left:635.50px;top:795px;font-size:14px;color:#262626;transform:scaleX(0.891)">+34922985058</div>
<div class="a" style="left:321px;top:849px;width:88px;height:36px;background:#4caf50;border-radius:2px"></div>
<div class="a" style="left:334px;top:860px"><svg width="12" height="12" viewBox="0 0 13 13"><path d="M0.5 1.5 Q0.5 0.5 1.5 0.5 H9.5 L12.5 3.5 V11.5 Q12.5 12.5 11.5 12.5 H1.5 Q0.5 12.5 0.5 11.5 Z" fill="#fff"/><rect x="2.5" y="2" width="7" height="3.2" fill="#4caf50"/><circle cx="6.5" cy="8.8" r="1.8" fill="#4caf50"/></svg></div>
<div class="t" style="left:350.00px;top:858px;font-size:14px;color:#fff;transform:scaleX(0.900)">Guardar</div>
<div class="a" style="left:413px;top:849px;width:136px;height:36px;background:#924a98;border-radius:2px"></div>
<div class="a" style="left:426px;top:860px"><svg width="13" height="13" viewBox="0 0 13 13"><rect x="5" y="0.5" width="3" height="12" rx=".6" fill="#fff"/><rect x="0.5" y="5" width="12" height="3" rx=".6" fill="#fff"/></svg></div>
<div class="t" style="left:443.30px;top:858px;font-size:14px;color:#fff;transform:scaleX(0.916)">Guardar y editar</div>
<div class="a" style="left:553px;top:849px;width:91px;height:36px;background:#f44336;border-radius:2px"></div>
<div class="a" style="left:565px;top:861px"><svg width="11" height="11" viewBox="0 0 11 11"><path d="M1.8 1.8 L9.2 9.2 M9.2 1.8 L1.8 9.2" stroke="#fff" stroke-width="2.4" stroke-linecap="round"/></svg></div>
<div class="t" style="left:580.00px;top:858px;font-size:14px;color:#fff;transform:scaleX(0.903)">Cancelar</div>

<!-- PHOTO -->
<div class="card" style="left:1386px;top:196px;width:342px;height:457px"></div>
<div class="t" style="left:1407.50px;top:228px;font-size:12px;color:#262626;transform:scaleX(0.977)">FOTO DE PERFIL</div>
<div class="a" style="left:1407px;top:255px;width:300px;height:1px;background:#e6e6e6"></div>
<svg class="a" style="left:1407px;top:276px" width="300" height="300" viewBox="0 0 300 300"><use href="#photo" width="300" height="300"/></svg>
<div class="a" style="left:1407px;top:596px;width:140px;height:36px;background:#f9f9f9;border:1px solid #dadada;border-radius:2px"></div>
<div class="t" style="left:1458.30px;top:606px;font-size:14px;color:#262626;transform:scaleX(0.876)">Cargar</div>
<div class="a" style="left:1567px;top:596px;width:140px;height:36px;background:#f44336;border-radius:2px"></div>
<div class="t" style="left:1613.90px;top:606px;font-size:14px;color:#fff;transform:scaleX(0.924)">Eliminar</div>

</body>
</html>
